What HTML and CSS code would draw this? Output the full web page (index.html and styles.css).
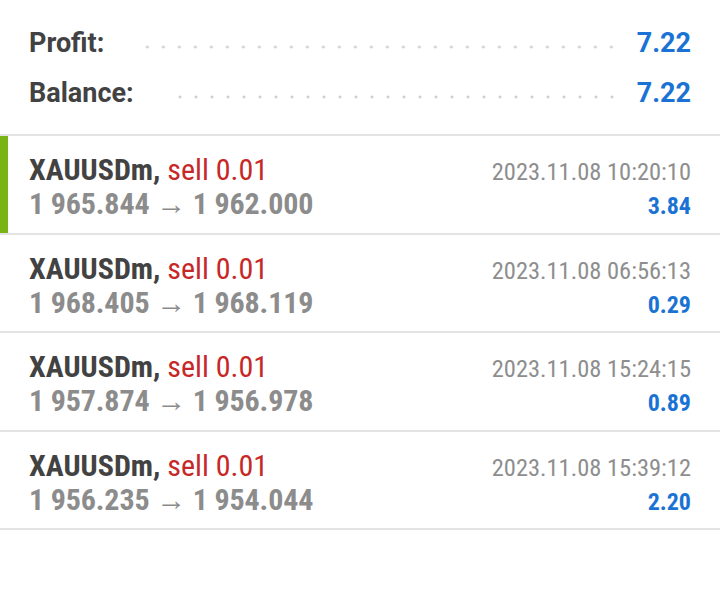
FILE: index.html
```html
<!DOCTYPE html>
<html>
<head>
<meta charset="utf-8">
<link rel="stylesheet" href="styles.css">
</head>
<body>
<div class="summary">
  <div class="sum-row"><span class="sum-label">Profit:</span><span class="leader"></span><span class="sum-value">7.22</span></div>
  <div class="sum-row"><span class="sum-label">Balance:</span><span class="leader"></span><span class="sum-value">7.22</span></div>
</div>
<div class="trades">
  <div class="trade active">
    <div class="sym">XAUUSDm, <span class="side">sell 0.01</span></div>
    <div class="date">2023.11.08 10:20:10</div>
    <div class="prices">1 965.844 → 1 962.000</div>
    <div class="pl">3.84</div>
  </div>
  <div class="trade">
    <div class="sym">XAUUSDm, <span class="side">sell 0.01</span></div>
    <div class="date">2023.11.08 06:56:13</div>
    <div class="prices">1 968.405 → 1 968.119</div>
    <div class="pl">0.29</div>
  </div>
  <div class="trade">
    <div class="sym">XAUUSDm, <span class="side">sell 0.01</span></div>
    <div class="date">2023.11.08 15:24:15</div>
    <div class="prices">1 957.874 → 1 956.978</div>
    <div class="pl">0.89</div>
  </div>
  <div class="trade">
    <div class="sym">XAUUSDm, <span class="side">sell 0.01</span></div>
    <div class="date">2023.11.08 15:39:12</div>
    <div class="prices">1 956.235 → 1 954.044</div>
    <div class="pl">2.20</div>
  </div>
</div>
</body>
</html>
```
FILE: styles.css
```css
html, body {
  margin: 0;
  background: #fff;
}
body {
  width: 720px;
  font-family: "Roboto Condensed", Roboto, sans-serif;
}
.summary {
  padding: 18px 29px 16px 29px;
  font-family: Roboto, sans-serif;
}
.sum-row {
  display: flex;
  align-items: baseline;
  line-height: 50px;
  height: 50px;
}
.sum-label {
  font-size: 27px;
  font-weight: 700;
  color: #424242;
}
.leader {
  flex: 1;
  align-self: flex-start;
  height: 4px;
  margin: 27px 17px 0 35px;
  background-image: radial-gradient(circle, #cfcfcf 1.2px, rgba(255,255,255,0) 1.8px);
  background-size: 16px 4px;
  background-repeat: repeat-x;
  background-position: right center;
}
.sum-value {
  font-size: 27px;
  font-weight: 700;
  color: #1a73d4;
}
.trades {
  border-top: 2px solid #e3e3e3;
}
.trade {
  display: grid;
  grid-template-columns: 1fr auto;
  grid-template-rows: 34px 34px;
  align-items: baseline;
  line-height: 34px;
  padding: 17px 29px 11.5px 29px;
  border-bottom: 2px solid #e3e3e3;
}
.trade.active {
  box-shadow: inset 8px 0 0 #79b416;
}
.sym {
  font-size: 30px;
  font-weight: 700;
  color: #424242;
}
.side {
  font-weight: 400;
  color: #c62828;
}
.date {
  font-size: 24.5px;
  color: #8e8e8e;
  text-align: right;
}
.prices {
  font-size: 30px;
  font-weight: 700;
  color: #8c8c8c;
  letter-spacing: -0.15px;
}
.pl {
  font-size: 24px;
  font-weight: 700;
  color: #1a73d4;
  text-align: right;
}
```
